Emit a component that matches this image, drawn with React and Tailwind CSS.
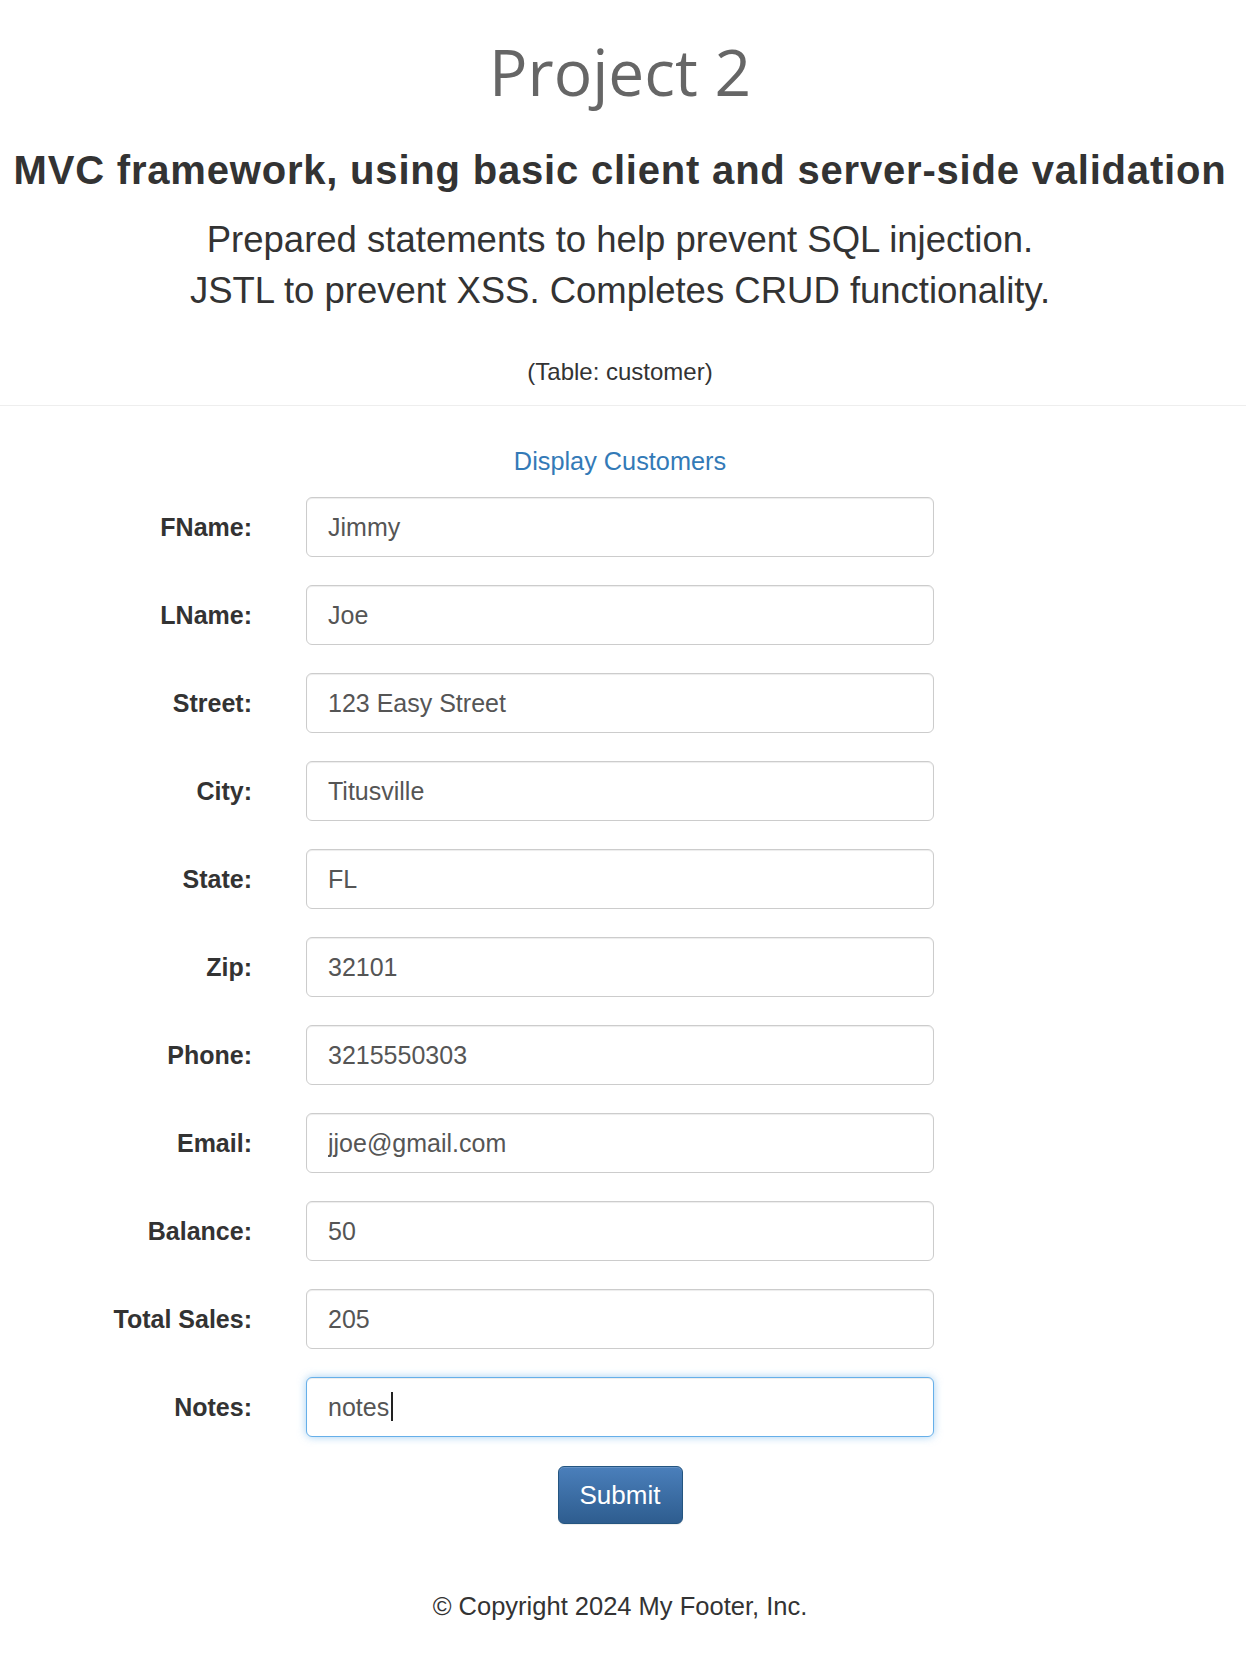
const fields = [
  { label: "FName:", value: "Jimmy" },
  { label: "LName:", value: "Joe" },
  { label: "Street:", value: "123 Easy Street" },
  { label: "City:", value: "Titusville" },
  { label: "State:", value: "FL" },
  { label: "Zip:", value: "32101" },
  { label: "Phone:", value: "3215550303" },
  { label: "Email:", value: "jjoe@gmail.com" },
  { label: "Balance:", value: "50" },
  { label: "Total Sales:", value: "205" },
]

const inputBase =
  "h-[60px] w-[628px] rounded-[6px] border bg-white pl-[21px] pr-[21px] text-[25px] text-[#555] outline-none"

export default function App() {
  return (
    <div className="min-h-[1656px] w-full bg-white font-['Liberation_Sans',Arial,sans-serif] text-[#333]">
      <div className="w-[1240px]">
        <h1 className="mt-[40px] text-center font-['Open_Sans',sans-serif] text-[64px] leading-[64px] text-[#666]">
          Project 2
        </h1>
        <h2 className="mt-[46px] text-center text-[40px] font-bold leading-[40px] tracking-[0.8px]">
          MVC framework, using basic client and server-side validation
        </h2>
        <p className="mt-[24px] text-center text-[36.5px] leading-[51px]">
          Prepared statements to help prevent SQL injection.
          <br />
          JSTL to prevent XSS. Completes CRUD functionality.
        </p>
        <p className="mt-[44px] text-center text-[24px] leading-[24px]">(Table: customer)</p>
      </div>

      <hr className="mt-[21px] w-[1246px] border-0 border-t border-[#eee]" />

      <div className="w-[1240px]">
        <div className="mt-[43px] text-center text-[25.3px] leading-[25px]">
          <a href="#" className="text-[#337ab7] no-underline">
            Display Customers
          </a>
        </div>

        <form className="mt-[23px] flex flex-col gap-[28px]" onSubmit={(e) => e.preventDefault()}>
          {fields.map((f, i) => (
            <div key={i} className="flex items-center">
              <label className="w-[252px] text-right text-[25px] font-bold leading-[25px]">{f.label}</label>
              <input
                className={`${inputBase} ml-[54px] border-[#ccc] shadow-[inset_0_1px_1px_rgba(0,0,0,0.075)]`}
                defaultValue={f.value}
              />
            </div>
          ))}

          <div className="flex items-center">
            <label className="w-[252px] text-right text-[25px] font-bold leading-[25px]">Notes:</label>
            <div className="relative ml-[54px]">
              <input
                className={`${inputBase} border-[#66afe9] shadow-[inset_0_1px_1px_rgba(0,0,0,0.075),0_0_8px_rgba(102,175,233,0.6)]`}
                defaultValue="notes"
              />
              <span className="absolute left-[85px] top-[15px] h-[29px] w-[2px] bg-[#222]" />
            </div>
          </div>

          <div className="ml-[306px] mt-[1px] flex w-[628px] justify-center">
            <button
              type="submit"
              className="h-[58px] w-[125px] rounded-[6px] border border-[#245580] bg-gradient-to-b from-[#4a7fbb] to-[#2e5d8f] text-[26px] text-white shadow-[inset_0_1px_0_rgba(255,255,255,0.15),0_1px_1px_rgba(0,0,0,0.075)]"
            >
              Submit
            </button>
          </div>
        </form>

        <footer className="mt-[70px] text-center text-[25.5px] leading-[25px]">© Copyright 2024 My Footer, Inc.</footer>
      </div>
    </div>
  )
}
